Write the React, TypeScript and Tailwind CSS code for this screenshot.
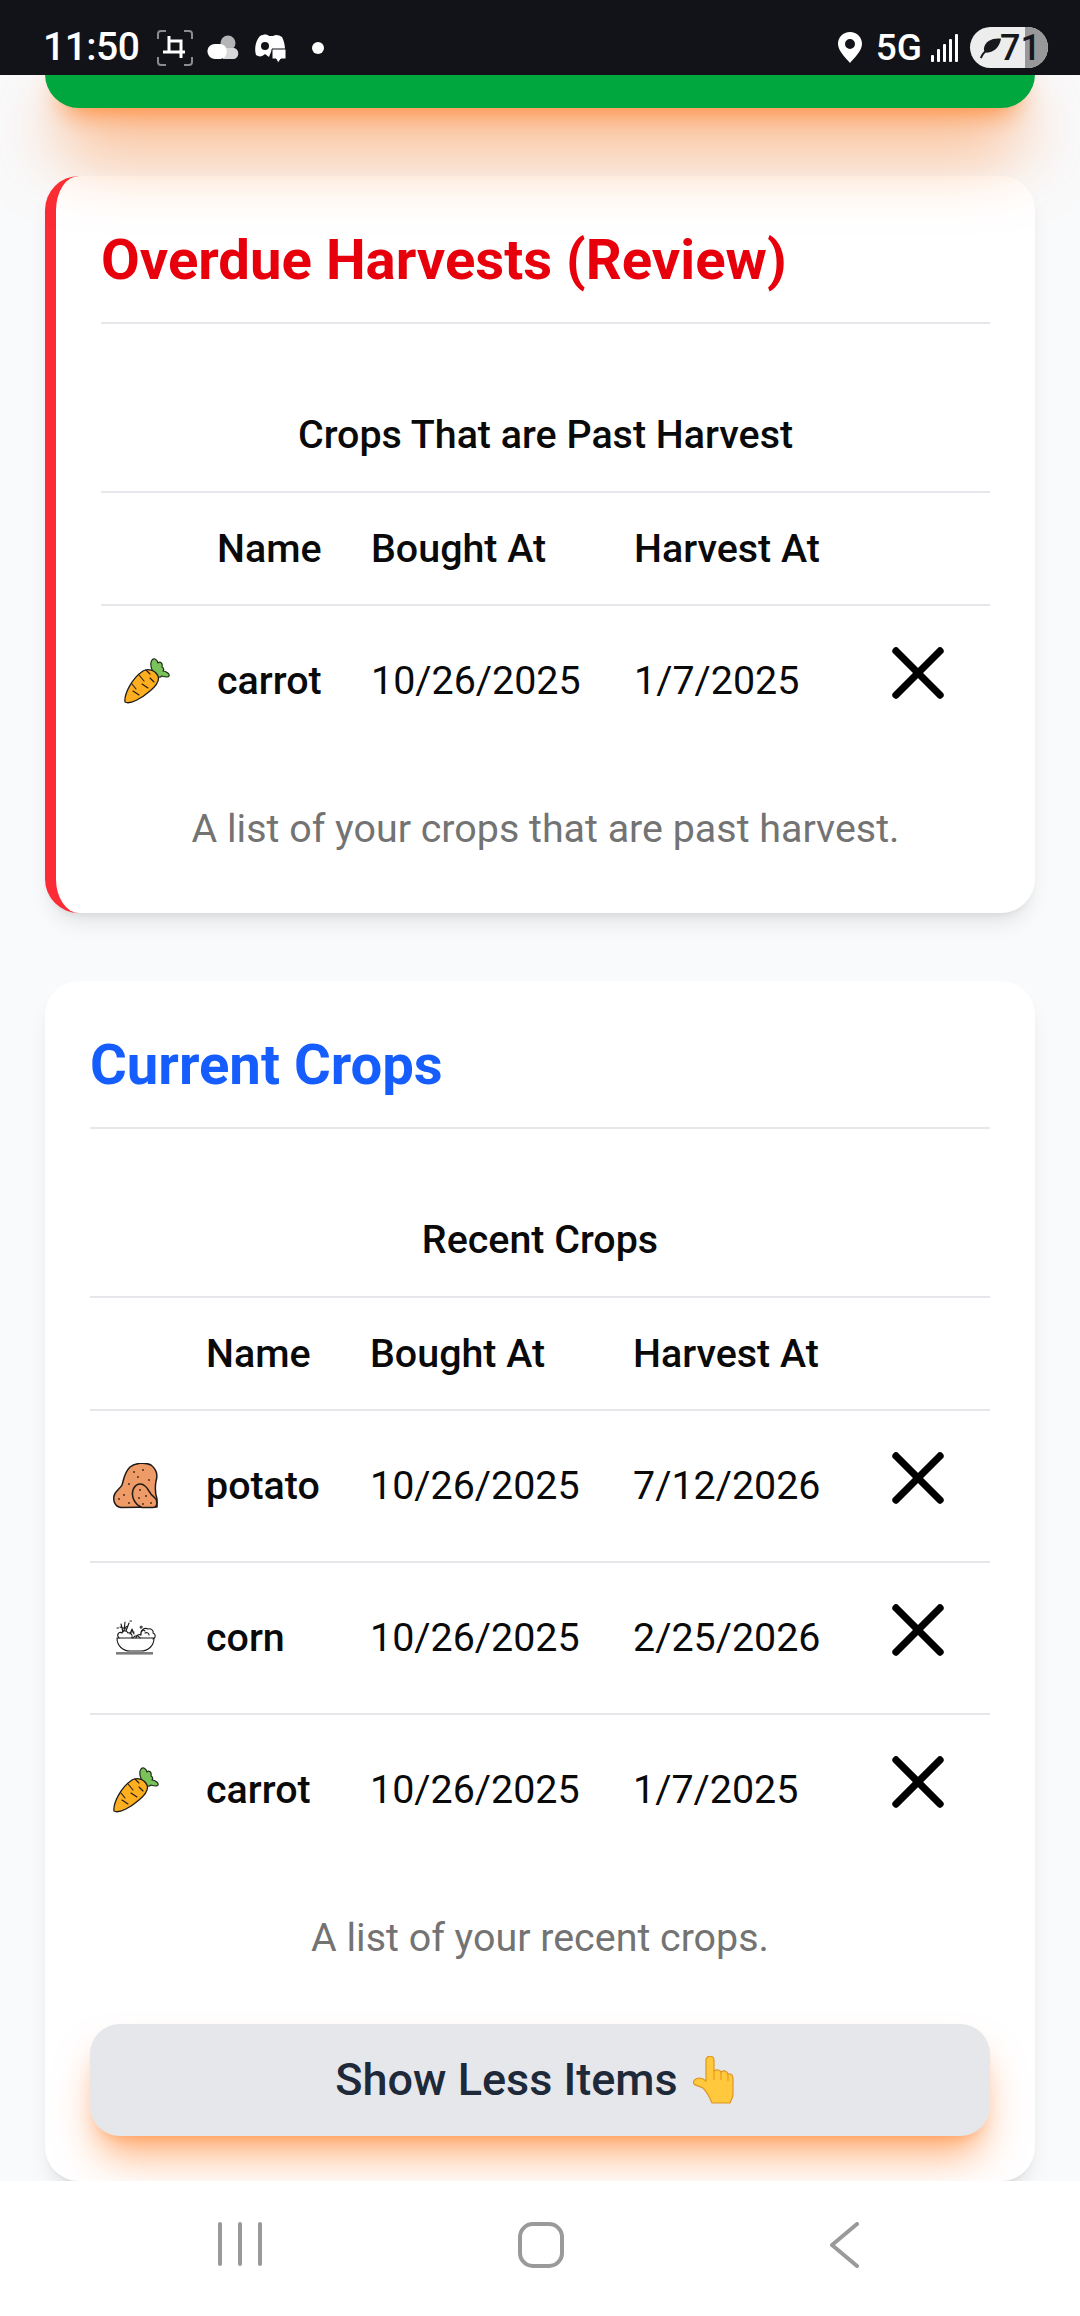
import { X } from "lucide-react";

type Crop = {
  name: string;
  bought: string;
  harvest: string;
  icon: "carrot" | "potato" | "bowl";
};

const overdue: Crop[] = [
  { name: "carrot", bought: "10/26/2025", harvest: "1/7/2025", icon: "carrot" },
];

const recent: Crop[] = [
  { name: "potato", bought: "10/26/2025", harvest: "7/12/2026", icon: "potato" },
  { name: "corn", bought: "10/26/2025", harvest: "2/25/2026", icon: "bowl" },
  { name: "carrot", bought: "10/26/2025", harvest: "1/7/2025", icon: "carrot" },
];

function CarrotIcon() {
  return (
    <svg width="46" height="46" viewBox="0 0 46 46" className="block">
      <path
        d="M29 14C27 10 26 5 28 2C30 0 33 1 34 5C36 3 39 5 38 9C40 10 40 12 39 13C42 13 46 16 45 18C44 20 41 19 38 18C36 20 33 19 31 17Z"
        fill="#7ac35b"
        stroke="#1f2a1a"
        strokeWidth="1.2"
        strokeLinejoin="round"
      />
      <path
        d="M1 44C0 37 7 21 19 13C24 10 31 12 34 18C36 23 32 28 26 33C18 40 6 47 1 44Z"
        fill="#ffae1f"
        stroke="#1c1c1c"
        strokeWidth="1.3"
        strokeLinejoin="round"
      />
      <path
        d="M22 12L26 16M30 24L26 20M15 17L20 23M24 30L18 26M8 26L12 31M15 37L9 33"
        stroke="#1c1c1c"
        strokeWidth="1.1"
        strokeLinecap="round"
        fill="none"
      />
    </svg>
  );
}

function PotatoIcon() {
  return (
    <svg width="46" height="46" viewBox="0 0 46 46" className="block">
      <path
        d="M8 44.5C2 44 0 38 1 33C2 28 7 26 9 22C11 16 11 10 17 4C22 0 32 -1 38 2C43 6 45 12 43 18C42 24 42 30 44 36L44 44Z"
        fill="#ee9b67"
        stroke="#1f1a17"
        strokeWidth="1.5"
        strokeLinejoin="round"
      />
      <path
        d="M29 44.5C22 42 18 34 20 27C22 21 28 19 32 23C36 26 36 31 41 34C45 37 45 44 40 44.5Z"
        fill="#ee9b67"
        stroke="#1f1a17"
        strokeWidth="1.5"
        strokeLinejoin="round"
      />
      <g fill="#3a2416">
        <circle cx="21" cy="9" r="0.9" />
        <circle cx="30" cy="7" r="0.9" />
        <circle cx="25" cy="14" r="0.9" />
        <circle cx="36" cy="17" r="0.9" />
        <circle cx="16" cy="21" r="0.9" />
        <circle cx="11" cy="32" r="0.9" />
        <circle cx="6" cy="36" r="0.9" />
        <circle cx="16" cy="40" r="0.9" />
        <circle cx="27" cy="27" r="0.9" />
        <circle cx="26" cy="35" r="0.9" />
        <circle cx="33" cy="33" r="0.9" />
        <circle cx="30" cy="41" r="0.9" />
        <circle cx="38" cy="40" r="0.9" />
      </g>
    </svg>
  );
}

function BowlIcon() {
  return (
    <svg width="42" height="36" viewBox="0 0 42 36" className="ml-[3px] block">
      <g fill="none" stroke="#1a1a1a" strokeWidth="1.1" strokeLinecap="round" strokeLinejoin="round">
        <path d="M1 18H38C38 26 32 31 25 31H14C7 31 1 26 1 18Z" />
        <path d="M3 18C0 15 3 11 6 13C6 10 11 10 12 13C14 12 17 14 16 18" />
        <path d="M7 12L5 4M8 11L9 2M10 11L13 3M4 7L10 9M12 6L8 8" />
        <path d="M14 14L16 9L18 14M15 12H18" />
        <path d="M20 18C20 15 23 14 25 15C24 11 28 7 32 9C35 8 38 11 37 13C40 14 40 18 37 19" />
        <path d="M17 18C19 15 22 15 24 18M29 13C31 12 33 13 33 15M26 11C27 10 28 10 29 11" />
        <path d="M1 8H2.5M14 1H15.5M25 6V8.5M24 7H26.5" />
      </g>
      <rect x="0" y="32" width="37" height="2.6" fill="#7d7d7d" />
    </svg>
  );
}

function HandIcon() {
  return (
    <svg width="44" height="48" viewBox="0 0 44 48" className="block">
      <path
        d="M13 4C13 -1 21 -1 21 4L21 15C24 13 27 14 28 16C31 14 34 15 35 18C38 17 40 19 40 23L40 38C40 42 38 44 37 47L19 47C17 42 14 36 10 32C7 30 3 30 1 28C-1 25 3 22 6 22C9 22 11 23 13 25Z"
        fill="#ffc83d"
        stroke="#e0951f"
        strokeWidth="1.2"
        strokeLinejoin="round"
      />
      <path d="M21 15V24M28 16V24M35 18V25" stroke="#e0951f" strokeWidth="1" fill="none" />
    </svg>
  );
}

function CropIcon({ icon }: { icon: Crop["icon"] }) {
  if (icon === "carrot") return <CarrotIcon />;
  if (icon === "potato") return <PotatoIcon />;
  return <BowlIcon />;
}

function StatusBar() {
  return (
    <div className="relative z-20 flex h-[75px] shrink-0 items-center justify-between bg-[#121318] pl-[43px] pr-[32px] pt-[20px] text-white">
      <div className="flex items-center">
        <span className="text-[39px] leading-none font-medium tracking-[-0.5px]">11:50</span>
        {/* screenshot */}
        <svg width="36" height="36" viewBox="0 0 36 36" className="ml-[18px]">
          <path
            d="M1 9V4Q1 1 4 1H9M27 1H32Q35 1 35 4V9M35 27V32Q35 35 32 35H27M9 35H4Q1 35 1 32V27"
            fill="none"
            stroke="#8b8b8e"
            strokeWidth="2"
          />
          <path d="M6 22H28M12 11H24V22M12 6V22M24 22V28" fill="none" stroke="#fff" strokeWidth="3" />
        </svg>
        {/* weather */}
        <svg width="34" height="28" viewBox="0 0 34 28" className="ml-[12px]">
          <circle cx="23" cy="9" r="7.5" fill="#b4b4b6" />
          <path d="M18 25H28C35 25 35 14 28 14H18Z" fill="#d8d8da" />
          <path d="M10 25C1 25 -1 11 10 10H15C24 10 24 25 15 25Z" fill="#fff" />
        </svg>
        {/* discord + message */}
        <svg width="34" height="30" viewBox="0 0 34 30" className="ml-[14px]">
          <path
            d="M7 3C11 1 14 1 16 3H20C23 1 26 2 29 4C31 8 32 12 32 17H19C18 19 17 21 16 24L12 21C9 24 6 24 3 22C1 15 3 7 7 3Z"
            fill="#fff"
          />
          <circle cx="12" cy="13" r="4" fill="#121318" />
          <path d="M19 16H33V26H28L25 30L23 26H19Z" fill="#fff" stroke="#121318" strokeWidth="1" />
        </svg>
        <span className="ml-[25px] block h-[12px] w-[12px] rounded-full bg-white" />
      </div>
      <div className="flex items-center">
        <svg width="24" height="31" viewBox="0 0 24 31">
          <path
            d="M12 0C5 0 0 5 0 12C0 19 8 26 12 31C16 26 24 19 24 12C24 5 19 0 12 0ZM12 7A5 5 0 1 1 12 17A5 5 0 1 1 12 7Z"
            fill="#fff"
            fillRule="evenodd"
          />
        </svg>
        <span className="ml-[14px] text-[37px] leading-none font-medium">5G</span>
        <svg width="27" height="28" viewBox="0 0 27 28" className="ml-[9px]">
          <g fill="#fff">
            <rect x="0" y="21" width="3" height="7" rx="1" />
            <rect x="6" y="15" width="3" height="13" rx="1" />
            <rect x="12" y="10" width="3" height="18" rx="1" />
            <rect x="18" y="5" width="3" height="23" rx="1" />
            <rect x="24" y="0" width="3" height="28" rx="1" />
          </g>
        </svg>
        <div className="relative ml-[12px] flex h-[41px] w-[78px] items-center overflow-hidden rounded-full bg-[#ededee] pl-[10px] text-[#17181b]">
          <span className="absolute inset-y-0 right-0 w-[23px] bg-[#98989a]" />
          <svg width="21" height="22" viewBox="0 0 27 28" className="relative">
            <path d="M27 2C16 1 6 5 5 15C5 17 6 19 7 20C18 20 25 13 27 2Z" fill="#17181b" />
            <path d="M1 27C4 20 9 15 16 11" stroke="#17181b" strokeWidth="2.5" fill="none" />
          </svg>
          <span className="relative -ml-[1px] text-[36px] leading-none font-medium">71</span>
        </div>
      </div>
    </div>
  );
}

function CropTable({
  caption,
  heading,
  crops,
  widths,
}: {
  caption: string;
  heading: string;
  crops: Crop[];
  widths: number[];
}) {
  return (
    <div>
      <table className="w-full table-fixed border-collapse text-[39.4px] text-[#0a0a0a]">
        <colgroup>
          {widths.map((w, i) => (
            <col key={i} style={{ width: w }} />
          ))}
          <col />
        </colgroup>
        <thead>
          <tr className="h-[113px] border-b-[2px] border-[#e5e7eb]">
            <th colSpan={5} className="text-center font-medium">
              {heading}
            </th>
          </tr>
          <tr className="h-[113px] border-b-[2px] border-[#e5e7eb]">
            <th />
            <th className="px-[22px] text-left font-medium">Name</th>
            <th className="px-[22px] text-left font-medium">Bought At</th>
            <th className="px-[22px] text-left font-medium">Harvest At</th>
            <th />
          </tr>
        </thead>
        <tbody>
          {crops.map((crop, i) => (
            <tr
              key={crop.name}
              className={i < crops.length - 1 ? "h-[152px] border-b-[2px] border-[#e5e7eb]" : "h-[151px]"}
            >
              <td className="pl-[23px]">
                <CropIcon icon={crop.icon} />
              </td>
              <td className="px-[22px] font-medium">{crop.name}</td>
              <td className="px-[22px]">{crop.bought}</td>
              <td className="px-[22px]">{crop.harvest}</td>
              <td>
                <div className="mb-[16px] flex justify-end pr-[28px]">
                  <X size={88} strokeWidth={2} className="text-black" />
                </div>
              </td>
            </tr>
          ))}
        </tbody>
      </table>
      <p className="mt-[45px] text-center text-[39.4px] leading-[56px] text-[#737373]">{caption}</p>
    </div>
  );
}

export default function App() {
  return (
    <div className="flex h-[2316px] w-[1080px] flex-col overflow-hidden bg-[#f9fafb] font-['Roboto',sans-serif]">
      <StatusBar />

      <main className="flex min-h-0 flex-1 flex-col px-[45px]">
        {/* submit button, scrolled mostly out of view */}
        <div className="relative z-10 -mt-[40px] h-[73px] shrink-0 rounded-[34px] bg-[#00a63e] shadow-[0_56px_70px_-14px_rgba(255,105,0,0.6),0_22px_28px_-17px_rgba(255,105,0,0.75)]" />

        {/* overdue */}
        <section className="mt-[68px] shrink-0 rounded-[34px] border-l-[11px] border-[#fb2c36] bg-white px-[45px] pt-[45px] pb-[56px] pr-[45px] shadow-[0_14px_22px_-6px_rgba(0,0,0,0.1),0_6px_9px_-6px_rgba(0,0,0,0.1)]">
          <h2 className="border-b-[2px] border-[#e5e7eb] pb-[22px] text-[56.25px] leading-[79px] font-bold text-[#e7000b]">
            Overdue Harvests (Review)
          </h2>
          <div className="mt-[55px]">
            <CropTable
              heading="Crops That are Past Harvest"
              caption="A list of your crops that are past harvest."
              crops={overdue}
              widths={[94, 154, 263, 254]}
            />
          </div>
        </section>

        {/* current */}
        <section className="mt-[68px] shrink-0 rounded-[34px] bg-white px-[45px] pt-[45px] pb-[45px] shadow-[0_14px_22px_-6px_rgba(0,0,0,0.1),0_6px_9px_-6px_rgba(0,0,0,0.1)]">
          <h2 className="border-b-[2px] border-[#e5e7eb] pb-[22px] text-[56.25px] leading-[79px] font-bold text-[#155dfc]">
            Current Crops
          </h2>
          <div className="mt-[55px]">
            <CropTable
              heading="Recent Crops"
              caption="A list of your recent crops."
              crops={recent}
              widths={[94, 164, 263, 254]}
            />
          </div>
          <button className="mt-[58px] flex h-[112px] w-full items-center justify-center gap-[15px] rounded-[30px] bg-[#e5e7eb] pr-[8px] text-[45px] font-medium text-[#1e2939] shadow-[0_28px_42px_-8px_rgba(255,105,0,0.5),0_11px_17px_-11px_rgba(255,105,0,0.5)]">
            Show Less Items
            <HandIcon />
          </button>
        </section>
      </main>

      {/* android nav */}
      <nav className="relative z-20 flex h-[135px] shrink-0 items-start bg-white pt-[41px]">
        <div className="ml-[218px] flex h-[44px] gap-[16px]">
          <span className="h-full w-[4px] rounded-full bg-[#9a9a9a]" />
          <span className="h-full w-[4px] rounded-full bg-[#9a9a9a]" />
          <span className="h-full w-[4px] rounded-full bg-[#9a9a9a]" />
        </div>
        <span className="ml-[256px] block h-[46px] w-[46px] rounded-[15px] border-[4px] border-[#9a9a9a]" />
        <svg width="30" height="46" viewBox="0 0 30 46" className="ml-[265px]">
          <path d="M28 2L3 23L28 44" fill="none" stroke="#9a9a9a" strokeWidth="4" strokeLinecap="round" strokeLinejoin="round" />
        </svg>
      </nav>
    </div>
  );
}
